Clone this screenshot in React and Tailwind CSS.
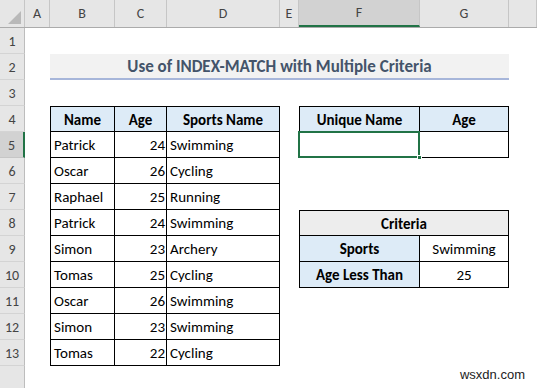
const people = [
  ['Patrick', 24, 'Swimming'],
  ['Oscar', 26, 'Cycling'],
  ['Raphael', 25, 'Running'],
  ['Patrick', 24, 'Swimming'],
  ['Simon', 23, 'Archery'],
  ['Tomas', 25, 'Cycling'],
  ['Oscar', 26, 'Swimming'],
  ['Simon', 23, 'Swimming'],
  ['Tomas', 22, 'Cycling'],
]

function Cell({ w, className = '', children }) {
  return <div className={`${w} h-full shrink-0 flex items-center pt-[2px] ${className}`}>{children}</div>
}

function Row({ n, active, children }) {
  return (
    <div className="flex h-[26px]">
      <div
        className={
          active
            ? 'w-[25px] h-full shrink-0 flex items-center justify-center pt-[2px] bg-[#d2d2d2] border-b border-b-[#c6c6c6] border-r-2 border-r-[#217346] text-[14px] text-[#444]'
            : 'w-[25px] h-full shrink-0 flex items-center justify-center pt-[2px] bg-[#e6e6e6] border-b border-b-[#d4d4d4] border-r border-r-[#bdbdbd] text-[14px] text-[#444]'
        }
      >
        {n}
      </div>
      {children}
    </div>
  )
}

function ColHead({ w, active, children }) {
  return (
    <div
      className={
        active
          ? `${w} h-full shrink-0 flex items-center justify-center bg-[#d2d2d2] border-r border-r-[#c6c6c6] border-b-2 border-b-[#217346] text-[#444]`
          : `${w} h-full shrink-0 flex items-center justify-center border-r border-r-[#c6c6c6] text-[#444]`
      }
    >
      {children}
    </div>
  )
}

export default function App() {
  return (
    <div className="relative w-[537px] h-[388px] overflow-hidden bg-white font-['Carlito','Calibri','Lato',sans-serif] text-[15px] text-black">
      {/* column headers */}
      <div className="flex h-[28px] bg-[#e6e6e6] border-b border-b-[#ababab] text-[14px]">
        <div className="relative w-[25px] h-full shrink-0 border-r border-r-[#c6c6c6]">
          <div className="absolute right-[3px] bottom-[3px] w-0 h-0 border-l-[13px] border-l-transparent border-b-[13px] border-b-[#b9b9b9]" />
        </div>
        <ColHead w="w-[25px]">A</ColHead>
        <ColHead w="w-[65px]">B</ColHead>
        <ColHead w="w-[52px]">C</ColHead>
        <ColHead w="w-[113px]">D</ColHead>
        <ColHead w="w-[19px]">E</ColHead>
        <ColHead w="w-[121px]" active>F</ColHead>
        <ColHead w="w-[89px]">G</ColHead>
        <ColHead w="w-[28px]"></ColHead>
      </div>

      <Row n={1} />
      <Row n={2}>
        <div className="w-[25px] shrink-0" />
        <div className="w-[459px] h-full shrink-0 flex items-center justify-center pt-[1px] bg-[#f2f2f2] border-b-2 border-b-[#a7b6da] text-[17px] font-bold text-[#44546a]">
          Use of INDEX-MATCH with Multiple Criteria
        </div>
      </Row>
      <Row n={3} />
      <Row n={4}>
        <div className="w-[25px] shrink-0" />
        <Cell w="w-[65px]" className="justify-center font-bold bg-[#ddebf7] border border-black">Name</Cell>
        <Cell w="w-[52px]" className="justify-center font-bold bg-[#ddebf7] border-t border-r border-b border-black">Age</Cell>
        <Cell w="w-[113px]" className="justify-center font-bold bg-[#ddebf7] border-t border-r border-b border-black">Sports Name</Cell>
        <div className="w-[19px] shrink-0" />
        <Cell w="w-[121px]" className="justify-center font-bold bg-[#ddebf7] border border-black">Unique Name</Cell>
        <Cell w="w-[89px]" className="justify-center font-bold bg-[#ddebf7] border-t border-r border-b border-black">Age</Cell>
      </Row>

      {people.map(([name, age, sport], i) => {
        const n = i + 5
        return (
          <Row key={n} n={n} active={n === 5}>
            <div className="w-[25px] shrink-0" />
            <Cell w="w-[65px]" className="pl-[3px] border-l border-r border-b border-black">{name}</Cell>
            <Cell w="w-[52px]" className="justify-end pr-[1px] border-r border-b border-black">{age}</Cell>
            <Cell w="w-[113px]" className="pl-[3px] border-r border-b border-black">{sport}</Cell>
            <div className="w-[19px] shrink-0" />
            {n === 5 && (
              <>
                <div className="relative w-[121px] h-full shrink-0 border-l border-r border-b border-black">
                  <div className="absolute -left-[2px] -top-[1px] -right-[1px] -bottom-[1px] border-2 border-[#217346]" />
                  <div className="absolute -right-[3px] -bottom-[3px] w-[5px] h-[5px] bg-[#217346] border border-white" />
                </div>
                <div className="w-[89px] h-full shrink-0 border-r border-b border-black" />
              </>
            )}
            {n === 8 && (
              <Cell w="w-[210px]" className="justify-center font-bold bg-[#ededed] border border-black">Criteria</Cell>
            )}
            {n === 9 && (
              <>
                <Cell w="w-[121px]" className="justify-center font-bold bg-[#ddebf7] border-l border-r border-b border-black">Sports</Cell>
                <Cell w="w-[89px]" className="justify-center border-r border-b border-black">Swimming</Cell>
              </>
            )}
            {n === 10 && (
              <>
                <Cell w="w-[121px]" className="justify-center font-bold bg-[#ddebf7] border-l border-r border-b border-black">Age Less Than</Cell>
                <Cell w="w-[89px]" className="justify-center border-r border-b border-black">25</Cell>
              </>
            )}
          </Row>
        )
      })}
      <Row n="" />

      <div className="absolute right-[12px] bottom-[4px] font-['Liberation_Sans',Arial,sans-serif] text-[13px] text-[#222]">
        wsxdn.com
      </div>
    </div>
  )
}
